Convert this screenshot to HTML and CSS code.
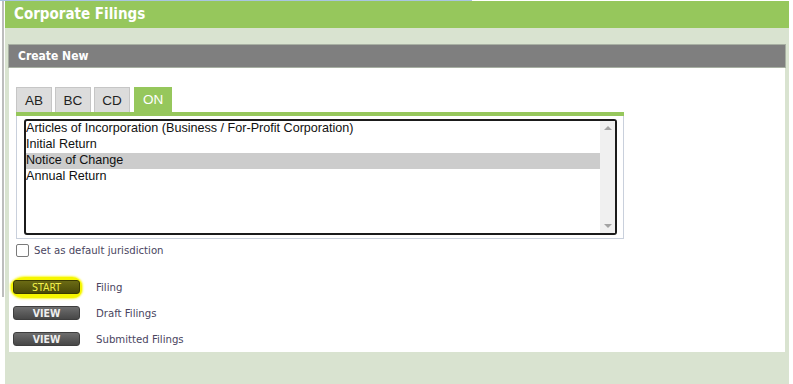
FILE: index.html
```html
<!DOCTYPE html>
<html>
<head>
<meta charset="utf-8">
<link rel="stylesheet" href="styles.css">
</head>
<body>
<div class="topline"></div>
<div class="frame">
  <div class="leftrule"></div>
  <div class="main">
    <div class="page-title">Corporate Filings</div>
    <div class="area">
      <div class="panel-head">Create New</div>
      <div class="panel-body">
        <div class="tabs">
          <div class="tab">AB</div>
          <div class="tab">BC</div>
          <div class="tab">CD</div>
          <div class="tab active">ON</div>
        </div>
        <div class="tab-line"></div>
        <div class="list-wrap">
          <div class="listbox">
            <div class="options">
              <div class="opt">Articles of Incorporation (Business / For-Profit Corporation)</div>
              <div class="opt">Initial Return</div>
              <div class="opt selected">Notice of Change</div>
              <div class="opt">Annual Return</div>
            </div>
            <div class="scrollbar">
              <span class="arrow up"></span>
              <span class="arrow down"></span>
            </div>
          </div>
        </div>
        <label class="check-row"><span class="checkbox"></span><span>Set as default jurisdiction</span></label>
        <div class="actions">
          <div class="action"><span class="btn start">START</span><span class="action-label">Filing</span></div>
          <div class="action"><span class="btn">VIEW</span><span class="action-label">Draft Filings</span></div>
          <div class="action"><span class="btn">VIEW</span><span class="action-label">Submitted Filings</span></div>
        </div>
      </div>
    </div>
  </div>
</div>
</body>
</html>
```
FILE: styles.css
```css
html, body {
  margin: 0;
  padding: 0;
  background: #ffffff;
  height: 384px;
  overflow: hidden;
}
body {
  font-family: "DejaVu Sans Condensed", "DejaVu Sans", sans-serif;
}
.topline {
  width: 472px;
  height: 1px;
  background: #a9c5e2;
}
.frame {
  display: flex;
  align-items: flex-start;
}
.leftrule {
  width: 2px;
  height: 296px;
  margin-left: 2px;
  margin-right: 1px;
  background: #bdbdbd;
}
.main {
  width: 784px;
  background: #d9e3d0;
}
.page-title {
  height: 27px;
  line-height: 26px;
  background: #96c75c;
  color: #ffffff;
  font-weight: bold;
  font-size: 15px;
  padding-left: 9px;
}
.area {
  padding: 16px 3px 32px 3px;
}
.panel-head {
  height: 22px;
  line-height: 22px;
  background: #7f7f7f;
  border: 1px solid #a8b0a3;
  color: #ffffff;
  font-weight: bold;
  font-size: 12px;
  padding-left: 9px;
}
.panel-body {
  margin: 0 1px 0 1px;
  height: 265px;
  background: #ffffff;
  padding: 19px 0 0 7px;
}
.tabs {
  display: flex;
  gap: 3px;
}
.tab {
  width: 34px;
  height: 24px;
  line-height: 25px;
  border: 1px solid #c6c6c6;
  border-bottom: none;
  background: #dcdcdc;
  font-family: "Liberation Sans", Arial, sans-serif;
  font-size: 13.5px;
  color: #222222;
  text-align: center;
}
.tab.active {
  width: 38px;
  margin-left: 1px;
  height: 25px;
  border: none;
  background: #96c75c;
  color: #ffffff;
}
.tab-line {
  width: 608px;
  height: 4px;
  background: #96c75c;
}
.list-wrap {
  width: 593px;
  padding: 3px 6px 3px 7px;
  border: 1px solid #c9d0dc;
  border-top: none;
  background: #ffffff;
}
.listbox {
  height: 112px;
  border: 2px solid #1b1b1b;
  border-radius: 3px;
  display: flex;
}
.options {
  flex: 1;
  padding-top: 0;
}
.opt {
  height: 16px;
  line-height: 15px;
  padding-left: 0;
  font-family: "Liberation Sans", Arial, sans-serif;
  font-size: 12.6px;
  color: #111111;
  white-space: nowrap;
}
.opt.selected {
  background: #cccccc;
}
.scrollbar {
  width: 15px;
  background: #f0f0f0;
  position: relative;
}
.arrow {
  position: absolute;
  left: 4px;
  width: 0;
  height: 0;
  border-left: 4px solid transparent;
  border-right: 4px solid transparent;
}
.arrow.up {
  top: 5px;
  border-bottom: 4px solid #a3a3a3;
}
.arrow.down {
  bottom: 5px;
  border-top: 4px solid #a3a3a3;
}
.check-row {
  display: flex;
  align-items: center;
  gap: 5px;
  margin-top: 5px;
  font-size: 11.3px;
  color: #4a4560;
}
.checkbox {
  width: 11px;
  height: 11px;
  border: 1px solid #7a7a7a;
  border-radius: 2px;
  background: #ffffff;
}
.actions {
  margin-top: 23px;
  margin-left: -3px;
  display: flex;
  flex-direction: column;
  gap: 12px;
}
.action {
  position: relative;
  isolation: isolate;
  display: flex;
  align-items: center;
  height: 14px;
}
.btn {
  position: relative;
  width: 65px;
  height: 12px;
  line-height: 12px;
  border: 1px solid #3e3e3e;
  border-radius: 3px;
  background: linear-gradient(#6e6e6e 0%, #5a5a5a 50%, #474747 100%);
  color: #eeeeee;
  font-size: 10.5px;
  font-weight: bold;
  text-align: center;
  margin-right: 16px;
}
.btn.start {
  background: linear-gradient(#6b6b14 0%, #5b5b0e 50%, #4a4a08 100%);
  color: #f2f24a;
  font-weight: normal;
  border-color: #3a3a00;
}
.btn.start::before {
  content: "";
  position: absolute;
  left: -3px;
  right: -3px;
  top: -4px;
  bottom: -5px;
  background: #f6f600;
  box-shadow: 0 0 2px 1px #fafa40;
  border-radius: 14px 10px 9px 12px / 9px 9px 8px 10px;
  z-index: -1;
}
.action-label {
  font-size: 11.3px;
  color: #4a4560;
}
```
